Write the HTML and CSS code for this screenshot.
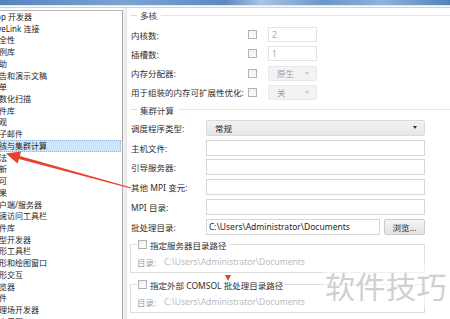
FILE: index.html
```html
<!DOCTYPE html>
<html lang="zh-CN">
<head>
    <meta charset="UTF-8">
    <title>首选项</title>
    <link rel="stylesheet" href="styles.css">
</head>
<body>
    <div class="titlebar"></div>
    <div class="edge"></div>

    <div class="main">
        <ul class="tree">
            <li>App 开发器</li>
            <li>LiveLink 连接</li>
            <li>安全性</li>
            <li>案例库</li>
            <li>帮助</li>
            <li>报告和演示文稿</li>
            <li>表单</li>
            <li>参数化扫描</li>
            <li>部件库</li>
            <li>外观</li>
            <li>电子邮件</li>
            <li class="selected">多核与集群计算</li>
            <li>方法</li>
            <li>更新</li>
            <li>许可</li>
            <li>结果</li>
            <li>客户端/服务器</li>
            <li>快速访问工具栏</li>
            <li>零件库</li>
            <li>模型开发器</li>
            <li>图形工具栏</li>
            <li>图形和绘图窗口</li>
            <li>图形交互</li>
            <li>浏览器</li>
            <li>文件</li>
            <li>物理场开发器</li>
            <li>用户界面</li>
        </ul>

        <div class="splitter"></div>

        <div class="settings">
            <div class="section-title"><span>多核</span></div>
            <div class="grid-multi">
                <span class="label">内核数:</span>
                <span class="check"></span>
                <span class="field disabled">2</span>

                <span class="label">插槽数:</span>
                <span class="check"></span>
                <span class="field disabled">1</span>

                <span class="label">内存分配器:</span>
                <span class="check"></span>
                <span class="combo disabled">原生<i class="caret"></i></span>

                <span class="label">用于组装的内存可扩展性优化:</span>
                <span class="check"></span>
                <span class="combo disabled">关<i class="caret"></i></span>
            </div>

            <div class="section-title"><span>集群计算</span></div>
            <div class="grid-cluster">
                <span class="label">调度程序类型:</span>
                <span class="combo">常规<i class="caret"></i></span>

                <span class="label">主机文件:</span>
                <span class="field"></span>

                <span class="label">引导服务器:</span>
                <span class="field"></span>

                <span class="label">其他 MPI 变元:</span>
                <span class="field"></span>

                <span class="label">MPI 目录:</span>
                <span class="field"></span>

                <span class="label">批处理目录:</span>
                <div class="field-row">
                    <span class="field">C:\Users\Administrator\Documents</span>
                    <span class="button">浏览...</span>
                </div>
            </div>

            <fieldset class="group">
                <legend><span class="check"></span>指定服务器目录路径</legend>
                <div class="group-row">
                    <span class="group-label">目录:</span>
                    <span class="path">C:\Users\Administrator\Documents</span>
                </div>
            </fieldset>

            <fieldset class="group">
                <legend><span class="check"></span>指定外部 COMSOL 批处理目录路径</legend>
                <div class="group-row">
                    <span class="group-label">目录:</span>
                    <span class="path">C:\Users\Administrator\Documents</span>
                </div>
            </fieldset>
        </div>
    </div>

    <!-- 标注箭头 -->
    <svg class="marks" width="450" height="319" viewBox="0 0 450 319">
        <polygon fill="#e8412f" points="6,153.5 21.1,151.4 19.8,155.9 131.2,187.6 130.8,188.6 19,158.9 17.5,163.4"/>
        <polygon fill="#e8412f" points="225,275 231,275 228,281"/>
    </svg>

    <div class="watermark">软件技巧</div>
</body>
</html>
```

FILE: styles.css
```css
* {
    box-sizing: border-box;
}
body {
    margin: 0;
    width: 450px;
    height: 319px;
    overflow: hidden;
    position: relative;
    background-color: #fff;
    font-family: "Noto Sans", "Noto Sans CJK SC", sans-serif;
    font-size: 8.5px;
    color: #2e2e2e;
}
.titlebar {
    height: 5px;
    background: linear-gradient(to right, #5584bd, #7ba4d3 28%, #5c89c1 50%, #a8c4e2 58%, #6a96c9 72%, #8fb2db 85%, #5282bb);
}
.edge {
    height: 3px;
    border-top: 1px solid #dfe7f1;
    border-bottom: 1px solid #d2d2d2;
    background-color: #fafafa;
}
.main {
    display: flex;
    height: 311px;
}
.tree {
    list-style: none;
    margin: 2px 0 0;
    padding: 0;
    width: 123px;
    flex-shrink: 0;
    overflow: hidden;
    background-color: #fff;
    border-top: 1px solid #b9b9b9;
    border-right: 1px solid #a9a9a9;
    font-size: 8px;
}
.tree li {
    height: 11.72px;
    line-height: 11.72px;
    text-indent: -9px;
    white-space: nowrap;
    color: #262626;
}
.tree li.selected {
    margin-right: 1px;
    background-color: #cce6fb;
    outline: 1px dotted #8fb2d6;
    outline-offset: -1px;
}
.splitter {
    width: 3px;
    flex-shrink: 0;
    background-color: #f0f0f0;
}
.settings {
    flex: 1;
    padding: 1px 25px 0 4px;
    border-left: 1px solid #e4e4e4;
    background-color: #fff;
}
.section-title {
    display: flex;
    align-items: center;
    height: 12px;
    margin-right: -25px;
    color: #3c3c3c;
}
.section-title::before {
    content: "";
    width: 6px;
    height: 1px;
    margin-right: 3px;
    background-color: #dcdcdc;
}
.section-title::after {
    content: "";
    flex: 1;
    height: 1px;
    margin-left: 4px;
    background-color: #e6e6e6;
}
.label {
    display: flex;
    align-items: center;
    white-space: nowrap;
}
.grid-multi {
    display: grid;
    grid-template-columns: 117px 20px 49px;
    grid-auto-rows: 15px;
    row-gap: 4.3px;
    margin: 6px 0 4px;
}
.grid-cluster {
    display: grid;
    grid-template-columns: 75px 1fr;
    grid-auto-rows: 16px;
    row-gap: 3.8px;
    margin-top: 4px;
}
.check {
    display: inline-block;
    align-self: center;
    flex-shrink: 0;
    width: 9px;
    height: 9px;
    border: 1px solid #b4b4b4;
    background: linear-gradient(#f2f2f2, #fbfbfb);
}
.field {
    display: flex;
    align-items: center;
    padding: 0 3px;
    border: 1px solid #d6d6d6;
    background-color: #fff;
    white-space: nowrap;
    overflow: hidden;
    color: #262626;
}
.field.disabled {
    border-color: #e4e4e4;
    color: #a8a8a8;
}
.combo {
    display: flex;
    align-items: center;
    padding: 0 7px 0 8px;
    border: 1px solid #dadada;
    border-radius: 2px;
    background: linear-gradient(#f3f3f3, #e6e6e6);
    color: #262626;
}
.combo.disabled {
    border-color: #e8e8e8;
    background: #f3f3f3;
    color: #a0a0a0;
}
.caret {
    margin-left: auto;
    width: 0;
    height: 0;
    border-left: 2.5px solid transparent;
    border-right: 2.5px solid transparent;
    border-top: 3px solid #333;
}
.combo.disabled .caret {
    border-top-color: #c8c8c8;
}
.field-row {
    display: flex;
    gap: 4px;
}
.field-row .field {
    flex: 1;
    padding-left: 2px;
}
.button {
    display: flex;
    align-items: center;
    justify-content: center;
    width: 41px;
    flex-shrink: 0;
    border: 1px solid #cdcdcd;
    border-radius: 2px;
    background: linear-gradient(#f4f4f4, #e2e2e2);
    color: #262626;
}
.group {
    margin: 4px 0 6px -1px;
    padding: 5px 6px 4px;
    border: 1px solid #dddddd;
    min-width: 0;
}
.group legend {
    display: flex;
    align-items: center;
    gap: 3px;
    height: 12px;
    padding: 0 2px 0 1px;
    color: #2e2e2e;
    white-space: nowrap;
}
.group-row {
    display: flex;
    align-items: center;
    height: 12px;
    color: #a0a0a0;
}
.group-label {
    width: 27px;
}
.path {
    color: #bdbdbd;
    white-space: nowrap;
}
.marks {
    position: absolute;
    top: 0;
    left: 0;
    pointer-events: none;
}
.watermark {
    position: absolute;
    left: 323px;
    top: 264px;
    padding: 0 2px;
    font-family: "Noto Sans CJK SC", sans-serif;
    font-size: 30px;
    line-height: 42px;
    letter-spacing: 0.5px;
    color: #d0d0d0;
    background-color: rgba(255, 255, 255, 0.55);
}
```
